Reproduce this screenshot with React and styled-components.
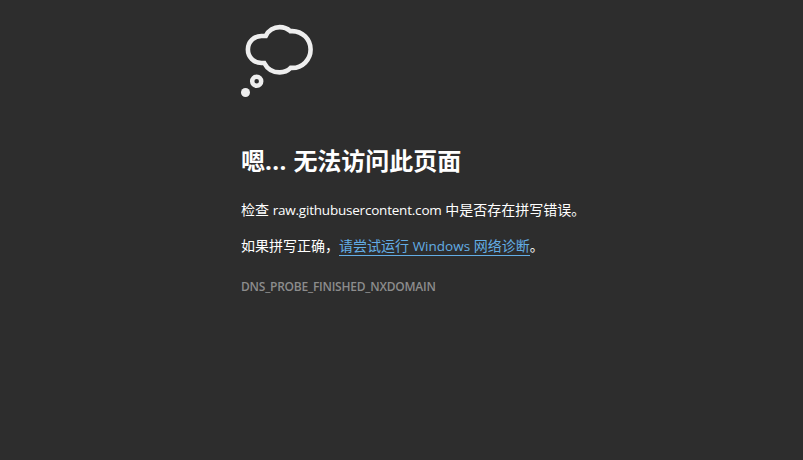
import React from "react";
import styled, { createGlobalStyle } from "styled-components";

const GlobalStyle = createGlobalStyle`
  body {
    margin: 0;
    background: #2d2d2d;
    color: #fff;
    font-family: "Open Sans", "Noto Sans CJK SC", sans-serif;
  }
`;

const Page = styled.main`
  box-sizing: border-box;
  min-height: 460px;
  padding: 25px 0 0 241px;
  display: flex;
  flex-direction: column;
  align-items: flex-start;
`;

const CloudIcon = styled.svg`
  display: block;
  width: 73px;
  height: 72px;
  overflow: visible;
`;

const Title = styled.h1`
  margin: 46px 0 0;
  font-size: 24px;
  line-height: 36px;
  font-weight: 700;
  white-space: nowrap;
`;

const Paragraph = styled.p`
  margin: ${(p) => p.$top}px 0 0;
  font-size: 14px;
  line-height: 20px;
  white-space: nowrap;
`;

const Latin = styled.span`
  font-size: ${(p) => p.$size || "inherit"};
  letter-spacing: ${(p) => p.$track}px;
`;

const Link = styled.a`
  display: inline-block;
  height: 19px;
  color: #63ade5;
  text-decoration: none;
  border-bottom: 1px solid #63ade5;
`;

const ErrorCode = styled.div`
  margin-top: 23px;
  color: #8c8c8c;
  font-size: 12px;
  line-height: 16px;
  font-weight: 600;
  letter-spacing: -0.22px;
  white-space: nowrap;
`;

export default function App() {
  return (
    <>
      <GlobalStyle />
      <Page>
        <CloudIcon viewBox="0 0 73 72" fill="none" aria-hidden="true">
          <path
            d="M24.7 11H20.4A13.5 13.5 0 0 0 20.4 38H23.2C26.2 43.8 32 47.4 38.7 47.4C42.8 47.4 46.8 45.8 49.7 42.9H51.2A18.4 18.4 0 0 0 51.2 6.1H49.3C46.4 3.5 42.7 2.1 38.7 2.1C32.9 2.1 27.2 5.5 24.7 11Z"
            stroke="#eee"
            strokeWidth="4.6"
          />
          <circle cx="15.7" cy="56.3" r="4.5" stroke="#eee" strokeWidth="4.5" />
          <circle cx="4.5" cy="67.5" r="4.5" fill="#eee" />
        </CloudIcon>
        <Title>
          嗯<Latin $track={0.4}>... </Latin>无法访问此页面
        </Title>
        <Paragraph $top={21}>
          检查 <Latin $size="13.5px" $track={-0.21}>raw.githubusercontent.com</Latin> 中是否存在拼写错误。
        </Paragraph>
        <Paragraph $top={16}>
          如果拼写正确，
          <Link href="#">
            请尝试运行 <Latin $size="13.5px" $track={0}>Windows</Latin> 网络诊断
          </Link>
          。
        </Paragraph>
        <ErrorCode>DNS_PROBE_FINISHED_NXDOMAIN</ErrorCode>
      </Page>
    </>
  );
}
